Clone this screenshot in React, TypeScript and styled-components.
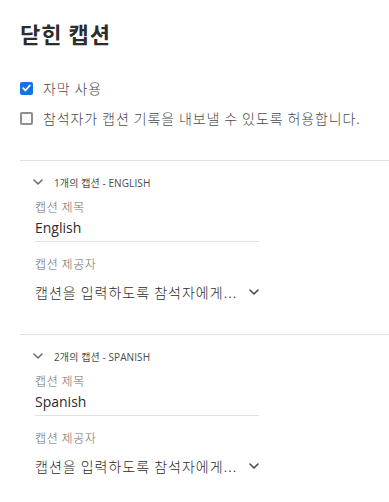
import React from 'react';
import styled, { createGlobalStyle } from 'styled-components';

const GlobalStyle = createGlobalStyle`
  body {
    margin: 0;
    background: #ffffff;
    font-family: "Open Sans", "Noto Sans CJK KR", sans-serif;
  }
`;

const Panel = styled.div`
  padding: 18px 0 40px 20px;
`;

const Title = styled.h1`
  margin: 0;
  font-size: 22px;
  line-height: 30px;
  font-weight: 700;
  letter-spacing: 1px;
  color: #2c2c2c;
  font-family: "Noto Sans CJK KR", sans-serif;
`;

const Options = styled.div`
  display: flex;
  flex-direction: column;
  gap: 10px;
  margin-top: 30px;
`;

const OptionRow = styled.label`
  display: flex;
  align-items: center;
  gap: 10px;
  height: 20px;
  font-size: 14px;
  font-weight: 300;
  letter-spacing: 0.9px;
  color: #4b4b4b;
  font-family: "Noto Sans CJK KR", sans-serif;
`;

const Box = styled.span<{ $checked?: boolean }>`
  box-sizing: border-box;
  width: 13px;
  height: 13px;
  border-radius: 2px;
  display: flex;
  align-items: center;
  justify-content: center;
  background: ${p => (p.$checked ? '#1473e6' : '#fafafa')};
  border: ${p => (p.$checked ? 'none' : '2px solid #8e8e8e')};
`;

const Section = styled.section`
  border-top: 1px solid #e1e1e1;
  margin-top: 32px;
  padding: 11px 0 0 0;

  & + & {
    margin-top: 32px;
  }
`;

const SectionHeader = styled.div`
  display: flex;
  align-items: center;
  gap: 11px;
  height: 20px;
  padding-left: 13px;
  font-size: 10px;
  color: #4b4b4b;
  font-family: "Open Sans", "Noto Sans CJK KR", sans-serif;
  letter-spacing: 0.1px;
`;

const Fields = styled.div`
  padding-left: 15px;
  width: 224px;
`;

const FieldLabel = styled.div<{ $first?: boolean }>`
  font-size: 12px;
  line-height: 16px;
  font-weight: 300;
  letter-spacing: 0.6px;
  color: #6e6e6e;
  margin-top: ${p => (p.$first ? '7px' : '14px')};
  font-family: "Noto Sans CJK KR", sans-serif;
`;

const TextInput = styled.div`
  margin-top: 3px;
  height: 23px;
  line-height: 20px;
  border-bottom: 1px solid #e1e1e1;
  font-size: 14px;
  color: #2c2c2c;
  font-family: "Open Sans", sans-serif;
`;

const Select = styled.div`
  margin-top: 10px;
  display: flex;
  align-items: center;
  justify-content: space-between;
  height: 20px;
  font-size: 14px;
  font-weight: 300;
  color: #2c2c2c;
  font-family: "Noto Sans CJK KR", sans-serif;
  letter-spacing: 1px;
`;

const Chevron = ({ size = 9, color = '#6e6e6e' }: { size?: number; color?: string }) => (
  <svg width={size} height={Math.round(size * 0.6)} viewBox="0 0 10 6" fill="none">
    <path d="M1 1l4 4 4-4" stroke={color} strokeWidth="1.6" strokeLinecap="round" strokeLinejoin="round" />
  </svg>
);

const Check = () => (
  <svg width="9" height="8" viewBox="0 0 9 8" fill="none">
    <path d="M1.2 4.2l2.2 2.3L7.8 1.5" stroke="#fff" strokeWidth="1.8" strokeLinecap="round" strokeLinejoin="round" />
  </svg>
);

type Caption = { index: number; language: string; title: string };

const captions: Caption[] = [
  { index: 1, language: 'ENGLISH', title: 'English' },
  { index: 2, language: 'SPANISH', title: 'Spanish' },
];

const CaptionSection = ({ caption }: { caption: Caption }) => (
  <Section>
    <SectionHeader>
      <Chevron size={10} />
      <span>{caption.index}개의 캡션 - {caption.language}</span>
    </SectionHeader>
    <Fields>
      <FieldLabel $first>캡션 제목</FieldLabel>
      <TextInput>{caption.title}</TextInput>
      <FieldLabel>캡션 제공자</FieldLabel>
      <Select>
        <span>캡션을 입력하도록 참석자에게...</span>
        <Chevron size={10} color="#4b4b4b" />
      </Select>
    </Fields>
  </Section>
);

export default function App() {
  return (
    <>
      <GlobalStyle />
      <Panel>
        <Title>닫힌 캡션</Title>
        <Options>
          <OptionRow>
            <Box $checked>
              <Check />
            </Box>
            자막 사용
          </OptionRow>
          <OptionRow>
            <Box />
            참석자가 캡션 기록을 내보낼 수 있도록 허용합니다.
          </OptionRow>
        </Options>
        {captions.map(c => (
          <CaptionSection key={c.index} caption={c} />
        ))}
      </Panel>
    </>
  );
}
